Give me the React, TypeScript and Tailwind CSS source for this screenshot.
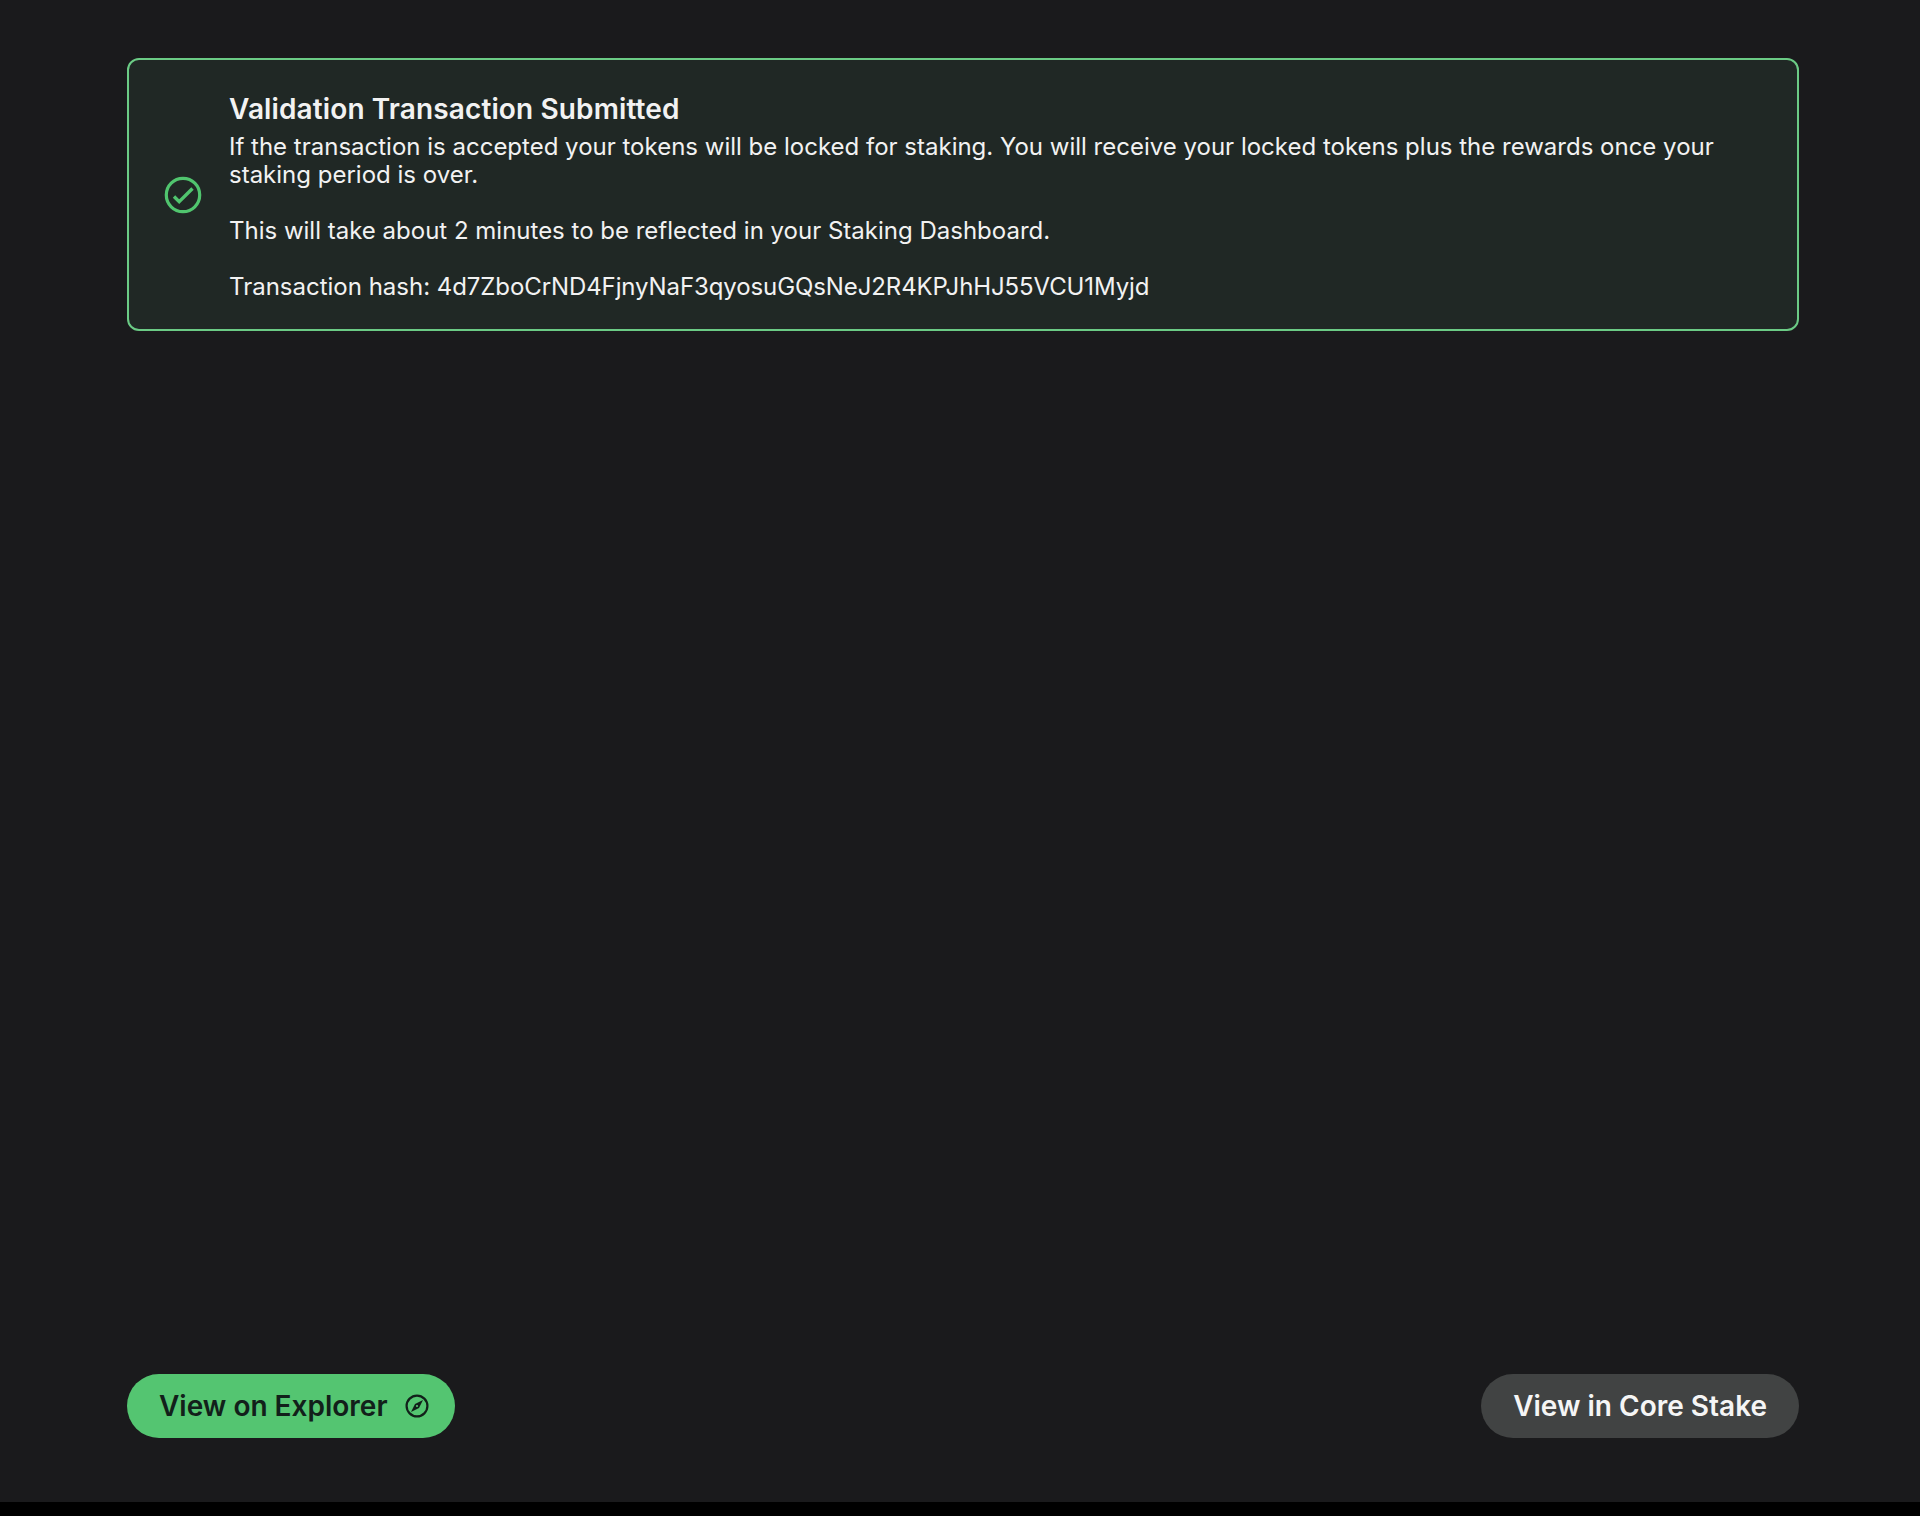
import React from "react";

const CheckIcon = () => (
  <svg width="40" height="40" viewBox="0 0 40 40" fill="none" stroke="#50C56E">
    <circle cx="20" cy="20" r="16.7" strokeWidth="3.2" />
    <path d="M11 21.5l5.2 5.2L29.5 13.5" strokeWidth="3.4" />
  </svg>
);

const CompassIcon = () => (
  <svg width="24" height="24" viewBox="0 0 24 24" fill="none">
    <circle cx="12" cy="12" r="10.4" stroke="#12201A" strokeWidth="2.2" />
    <path d="M18 6l-8 4-4 8 8-4z" fill="#12201A" />
    <circle cx="12" cy="12" r="1.1" fill="#54C571" />
  </svg>
);

const App = () => {
  return (
    <div className="bg-black font-['Inter',sans-serif] [font-optical-sizing:none] h-[1516px]">
      <main className="bg-[#1A1A1C] h-[1502px] pl-[127px] pr-[121px] pt-[58px] pb-[64px] flex flex-col justify-between">
        {/* success banner */}
        <section className="h-[273px] flex items-center border-2 border-[#6BCB85] rounded-[12px] bg-[#202825] text-[#F2F2F2]">
          <div className="w-[100px] shrink-0 flex justify-center pl-[8px]">
            <CheckIcon />
          </div>
          <div className="pr-[60px] pt-[3px]">
            <h2 className="text-[28px] leading-[36px] font-semibold tracking-[0.12px]">Validation Transaction Submitted</h2>
            <p className="text-[24px] leading-[28px] mt-[6px]">
              If the transaction is accepted your tokens will be locked for staking. You will receive your locked tokens plus the rewards once your staking period is over.
            </p>
            <p className="text-[24px] leading-[28px] mt-[28px]">
              This will take about 2 minutes to be reflected in your Staking Dashboard.
            </p>
            <p className="text-[24px] leading-[28px] mt-[28px]">
              Transaction hash: <span className="tracking-[-0.1px]">4d7ZboCrND4FjnyNaF3qyosuGQsNeJ2R4KPJhHJ55VCU1Myjd</span>
            </p>
          </div>
        </section>

        {/* actions */}
        <div className="flex justify-between items-center">
          <button className="h-[64px] pl-[32px] pr-[26px] flex items-center gap-[17px] rounded-full bg-[#54C571] text-[#12201A] text-[28px] font-semibold">
            View on Explorer
            <CompassIcon />
          </button>
          <button className="h-[64px] px-[32px] flex items-center rounded-full bg-[#414343] text-[#F5F5F5] text-[28px] font-semibold">
            View in Core Stake
          </button>
        </div>
      </main>
    </div>
  );
};

export default App;
